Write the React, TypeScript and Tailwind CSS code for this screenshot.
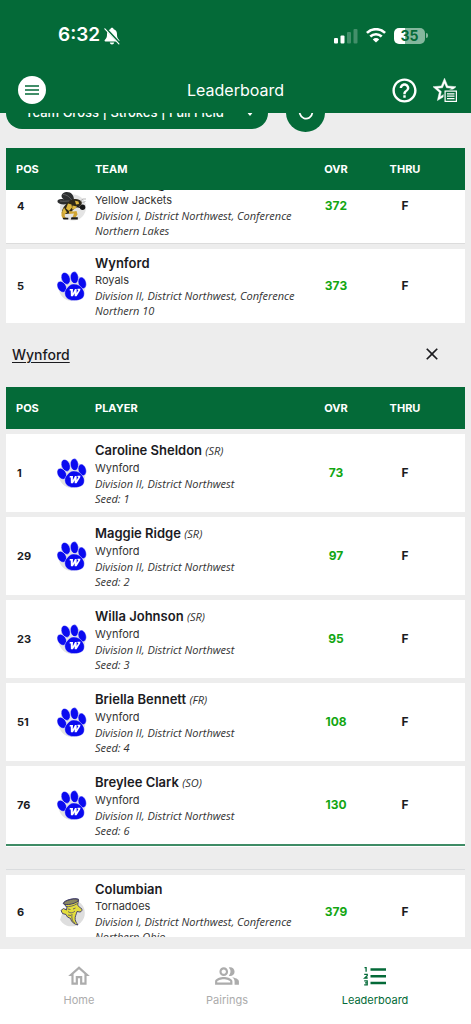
import React, { useState } from "react";
import { MdClose, MdHelpOutline, MdOutlineHome, MdOutlinePeopleAlt } from "react-icons/md";

interface Team {
  pos: number;
  name: string;
  mascot: string;
  details: string;
  score: number;
  thru: string;
  logo: React.ReactNode;
}

interface Player {
  pos: number;
  name: string;
  year: string;
  seed: number;
  score: number;
}

const PawLogo = () => (
  <svg viewBox="0 0 30 30" className="size-[30px]" aria-hidden="true">
    <circle cx="15" cy="16.5" r="13.3" fill="#e3e3e3" />
    <g fill="#0a0af0" stroke="#fff" strokeWidth="0.4">
      <ellipse cx="4.8" cy="15.8" rx="4.2" ry="6" transform="rotate(-32 4.8 15.8)" />
      <ellipse cx="8.7" cy="7.4" rx="4.2" ry="6.2" transform="rotate(-22 8.7 7.4)" />
      <ellipse cx="17.4" cy="6.6" rx="4" ry="6" transform="rotate(-6 17.4 6.6)" />
      <ellipse cx="25.2" cy="11.9" rx="3.9" ry="5.9" transform="rotate(-16 25.2 11.9)" />
      <path d="M16.8 13c-3.600 0-5 2.200-6.700 3.900-2 2-3 4.700-2 7.500 1.400 3.900 5.200 5.200 9.400 5.200 5 0 9-1.500 9.700-5.500.500-3-.500-4.700-1.900-6.700-1.800-2.600-4.500-4.400-8.500-4.400z" />
    </g>
    <path
      d="M12.800 18h3.200l-.200 4.200 2.200-4.200h1.600l.100 4 1.700-2.900h-.900v-1.300h3l-.400 1.600-3.500 5.800h-1.900l-.100-3-1.600 3h-2.100l-.200-5.600h-1.100z"
      fill="#fff"
    />
  </svg>
);

const HornetLogo = () => (
  <svg viewBox="0 0 30 30" className="size-[30px]" aria-hidden="true">
    <circle cx="16" cy="16.500" r="13" fill="#e4e4e4" />
    <path d="M14 12C9 14 2 14 .500 11 0 8 4 7.500 7 8.500 3 6 4 2 9 1c5-.500 8 3 8 8z" fill="#2c2e2f" />
    <path d="M6 3.500c4 0 7 3 9 6M3 10c4 .500 6 0 9.500 0" stroke="#777" fill="none" strokeWidth="0.700" />
    <path d="M13 10c4-3 9-2.500 11.500.500 1 2.500-.500 4.500-3 5l-4 2-5 5-7 1c-2-4 2-10 7.500-13.500z" fill="#2e2818" />
    <path
      d="M11 12.500l3.500 1 .500 3-3 3.500-3-2.500zM7 16.500l3 5-3.500 2.500-1.500-3zM18 9.800l3.500.700.500 2.500-3 .500zM15.500 14.500l4.500 1-2 2.500-3 .500z"
      fill="#dfb83f"
    />
    <path d="M4.500 21l3 1.500.500 3.500 2.500 1.500H6L4.500 25zM12 20l4.500.500 3-.500 1 3.500-2 3h-3l1.500-4-5 .500z" fill="#d0a534" />
    <path d="M5.500 26.700h5.800v1.800H6.500zM14.500 26.200h6.300v2.300h-7z" fill="#1b1b1b" />
    <path d="M20 15.500l4 1" stroke="#1b1b1b" strokeWidth="1.600" />
    <circle cx="25.600" cy="16.300" r="2.700" fill="#171717" />
    <path d="M23.500 10l2.500-2h3M25.500 11.500l3-1" stroke="#999" fill="none" strokeWidth="0.700" />
  </svg>
);

const TornadoLogo = () => (
  <svg viewBox="0 0 30 30" className="size-[30px]" aria-hidden="true">
    <circle cx="14.500" cy="16" r="13.300" fill="#dedede" />
    <path d="M0 0h17L6 14 3 23 0 20z" fill="#fff" />
    <path
      d="M6.200 6.500C7 3 18 .500 21.500 2.200c.300 2.500-1 4.300-.700 6.300 1.700.700 1.500 2.500 3.700 3 1 1.500.300 3-1.500 3.500l-3-.500c-.800 3.500-2.300 5-1.800 8 .300 2.200 1.500 3.500 2.800 5.500-3.500-.500-6.700-3-7.500-6.500l-3-1.500-1.500-2.500-3.500-1-1.500-3 2.500-2 3 1.500.500-3z"
      fill="#e3dd3d"
      stroke="#3a3768"
      strokeWidth="0.900"
      strokeLinejoin="round"
    />
    <ellipse cx="14" cy="4.800" rx="7.500" ry="2.300" transform="rotate(-13 14 4.800)" fill="#8a8760" stroke="#3a3768" strokeWidth="0.900" />
    <path
      d="M8.500 9.500c4 .500 8-.500 12-3M11 12l2.500.500M16 12l2.500-1M11 14.500c2.500 2 5 1.500 7-.500M11 18l3 .500M15 17c-.500 4 0 7 3 9.500"
      stroke="#4b4870"
      fill="none"
      strokeWidth="0.800"
    />
  </svg>
);

const BellOffIcon = () => (
  <svg viewBox="0 0 16 18" className="h-[18px] w-4" aria-hidden="true">
    <path
      d="M8 .800c.900 0 1.600.600 1.700 1.500 2.300.700 3.300 2.600 3.300 5 0 3.700 1 4.500 2.200 5.800.500.600.200 1.400-.600 1.400H1.400c-.800 0-1.100-.800-.600-1.400C2 11.800 3 11 3 7.300c0-2.400 1-4.300 3.300-5C6.400 1.400 7.100.800 8 .800zM5.800 15.500h4.400c-.200 1.200-1.100 1.900-2.200 1.900s-2-.700-2.200-1.900z"
      fill="#fff"
    />
    <path d="M1.500 1.200l14 15" stroke="#046a38" strokeWidth="2.400" />
    <path d="M.900 1.800l14 15" stroke="#fff" strokeWidth="1.200" strokeLinecap="round" />
  </svg>
);

const SignalIcon = () => (
  <svg viewBox="0 0 24 16" className="h-4 w-6" fill="#fff" aria-hidden="true">
    <rect x="0" y="10" width="4" height="5.500" rx="1" />
    <rect x="6.500" y="7.500" width="4" height="8" rx="1" />
    <rect x="13" y="4" width="4" height="11.500" rx="1" opacity="0.250" />
    <rect x="19.500" y="1" width="4" height="14.500" rx="1" opacity="0.250" />
  </svg>
);

const WifiIcon = () => (
  <svg viewBox="0 0 20 15" className="h-[15px] w-5" aria-hidden="true">
    <g fill="none" stroke="#fff" strokeWidth="2.600">
      <path d="M.900 4.900a13 13 0 0 1 18.200 0" />
      <path d="M4.300 8.500a8.200 8.200 0 0 1 11.400 0" />
    </g>
    <path d="M10 14.500L6.800 11.400a4.600 4.600 0 0 1 6.400 0z" fill="#fff" />
  </svg>
);

const FavoritesIcon = () => (
  <svg viewBox="0 0 24 24" className="size-6" aria-hidden="true">
    <path
      transform="translate(-2.3 -2.2) scale(1.15 1.18)"
      fill="#fff"
      stroke="#fff"
      strokeWidth="0.4"
      d="M12 15.390l-3.760 2.270.990-4.280-3.320-2.880 4.380-.370L12 6.090l1.710 4.040 4.380.370-3.320 2.880.990 4.280M22 9.240l-7.190-.610L12 2 9.190 8.630 2 9.240l5.450 4.730L5.820 21 12 17.270 18.180 21l-1.640-7.030L22 9.240z"
    />
    <rect x="10.500" y="11.500" width="13.500" height="12.500" fill="#046a38" />
    <rect x="12.100" y="13.100" width="11.300" height="10.300" fill="none" stroke="#fff" strokeWidth="1.200" />
    <path d="M14 15.900h7.500M14 18.200h7.500M14 20.600h7.500" stroke="#fff" strokeWidth="1.200" />
  </svg>
);

const NumberedListIcon = () => (
  <svg viewBox="0 0 24 20" className="h-5 w-6" fill="none" stroke="currentColor" aria-hidden="true">
    <path d="M7.500 3.500h15.500M7.500 10.300h15.500M7.500 17h15.500" strokeWidth="2.500" />
    <path
      d="M1.500 1.600h1.600v4.200M1.200 8.300h3v1.500L1.700 12h3M1.200 14.800h3v4H1.200M2 16.800h2"
      strokeWidth="1.300"
    />
  </svg>
);

const teams: Team[] = [
  {
    pos: 4,
    name: "Perrysburg",
    mascot: "Yellow Jackets",
    details: "Division I, District Northwest, Conference Northern Lakes",
    score: 372,
    thru: "F",
    logo: <HornetLogo />,
  },
  {
    pos: 5,
    name: "Wynford",
    mascot: "Royals",
    details: "Division II, District Northwest, Conference Northern 10",
    score: 373,
    thru: "F",
    logo: <PawLogo />,
  },
  {
    pos: 6,
    name: "Columbian",
    mascot: "Tornadoes",
    details: "Division I, District Northwest, Conference Northern Ohio",
    score: 379,
    thru: "F",
    logo: <TornadoLogo />,
  },
];

const players: Player[] = [
  { pos: 1, name: "Caroline Sheldon", year: "SR", seed: 1, score: 73 },
  { pos: 29, name: "Maggie Ridge", year: "SR", seed: 2, score: 97 },
  { pos: 23, name: "Willa Johnson", year: "SR", seed: 3, score: 95 },
  { pos: 51, name: "Briella Bennett", year: "FR", seed: 4, score: 108 },
  { pos: 76, name: "Breylee Clark", year: "SO", seed: 6, score: 130 },
];

const rowGrid =
  "grid grid-cols-[41px_38px_1fr_70px_68px] items-center pl-[10px] pr-[26px]";

const TableHead = ({ label }: { label: string }) => (
  <thead className="block">
    <tr className={`${rowGrid} h-[42px] bg-[#046a38] text-[11px] font-bold text-white`}>
      <th className="text-left">POS</th>
      <td></td>
      <th className="text-left">{label}</th>
      <th>OVR</th>
      <th>THRU</th>
    </tr>
  </thead>
);

const TeamRow = ({ team }: { team: Team }) => (
  <tr className={`${rowGrid} shrink-0 bg-white py-[5px]`}>
    <td className="pl-px text-[11px] font-bold">{team.pos}</td>
    <td>{team.logo}</td>
    <td className="text-[11px] leading-[15px]">
      <div className="text-[13px] leading-[19px] font-semibold">{team.name}</div>
      <div className="text-[#333]">{team.mascot}</div>
      <div className="font-['Open_Sans'] text-[#333] italic">{team.details}</div>
    </td>
    <td className="text-center text-[12px] font-bold text-[#12a612]">{team.score}</td>
    <td className="text-center text-[12px] font-bold">{team.thru}</td>
  </tr>
);

const PlayerRow = ({ player }: { player: Player }) => (
  <tr className={`${rowGrid} bg-white py-[6px]`}>
    <td className="pl-px text-[11px] font-bold">{player.pos}</td>
    <td>
      <PawLogo />
    </td>
    <td className="text-[11px] leading-[15px]">
      <div className="mb-px text-[13px] leading-5 font-semibold">
        {player.name}{" "}
        <span className="font-['Open_Sans'] text-[11px] leading-none font-normal text-[#333] italic">
          ({player.year})
        </span>
      </div>
      <div className="text-[#333]">Wynford</div>
      <div className="font-['Open_Sans'] text-[#333] italic">
        <div>Division II, District Northwest</div>
        <div>Seed: {player.seed}</div>
      </div>
    </td>
    <td className="text-center text-[12px] font-bold text-[#12a612]">{player.score}</td>
    <td className="text-center text-[12px] font-bold">F</td>
  </tr>
);

const App: React.FC = () => {
  const [tab, setTab] = useState("leaderboard");

  const tabs = [
    { id: "home", label: "Home", icon: <MdOutlineHome size={26} /> },
    { id: "pairings", label: "Pairings", icon: <MdOutlinePeopleAlt size={26} /> },
    { id: "leaderboard", label: "Leaderboard", icon: <NumberedListIcon /> },
  ];

  return (
    <div className="flex h-screen flex-col overflow-hidden bg-[#ededed] font-[Inter,sans-serif] text-[#1b1b1f]">
      <header className="shrink-0 bg-[#046a38] text-white">
        <div className="flex h-[67px] items-center justify-between pt-1 pr-[43px] pl-[58px]">
          <div className="flex items-center gap-1 text-[19px] font-semibold">
            <span>6:32</span>
            <BellOffIcon />
          </div>
          <div className="flex items-center gap-2">
            <SignalIcon />
            <WifiIcon />
            <div className="flex items-center gap-px">
              <div className="flex h-4 w-[31px] items-center justify-center rounded-[5px] bg-linear-to-r from-white from-35% to-[#84b79d] to-35% text-[14px] font-bold text-[#046a38]">
                35
              </div>
              <div className="h-[5px] w-[2px] rounded-r bg-[#84b79d]"></div>
            </div>
          </div>
        </div>
        <div className="grid h-[46px] grid-cols-[1fr_auto_1fr] items-center px-[14px]">
          <button
            aria-label="Menu"
            className="ml-1 flex size-7 items-center justify-center rounded-full bg-white"
          >
            <svg viewBox="0 0 14 10" className="h-[10px] w-[14px]" aria-hidden="true">
              <path d="M0 1h14M0 5h14M0 9h14" stroke="#046a38" strokeWidth="1.600" />
            </svg>
          </button>
          <h1 className="text-[16px]">Leaderboard</h1>
          <div className="flex items-center justify-end gap-[14px]">
            <button aria-label="Help">
              <MdHelpOutline size={29} />
            </button>
            <button aria-label="Favorites">
              <FavoritesIcon />
            </button>
          </div>
        </div>
      </header>

      <main className="mb-3 min-h-0 flex-1 overflow-hidden px-[6px]">
        <div className="flex h-[19px] items-end gap-[18px] overflow-hidden">
          <button className="mb-[3px] flex h-8 w-[262px] shrink-0 items-center justify-between rounded-full bg-[#046a38] pr-[14px] pl-[19px] text-[13px] font-medium text-white">
            Team Gross | Strokes | Full Field
            <svg viewBox="0 0 8 5" className="h-[5px] w-2" aria-hidden="true">
              <path d="M0 0h8L4 5z" fill="#fff" />
            </svg>
          </button>
          <button
            aria-label="Refresh"
            className="flex size-[39px] shrink-0 items-center justify-center rounded-full bg-[#046a38]"
          >
            <svg viewBox="0 0 16 16" className="size-4" aria-hidden="true">
              <path d="M13 3.500A6.300 6.300 0 1 0 14.300 8" fill="none" stroke="#fff" strokeWidth="1.800" />
              <path d="M14.500 1v5h-5z" fill="#fff" />
            </svg>
          </button>
        </div>

        <table className="mt-4 block">
          <TableHead label="TEAM" />
          <tbody className="flex h-[133px] flex-col justify-end overflow-hidden">
            <TeamRow team={teams[0]} />
            <tr className="mb-[5px] block h-px shrink-0 bg-[#dcdcdc]"></tr>
            <TeamRow team={teams[1]} />
          </tbody>
        </table>

        <div className="flex h-16 items-center justify-between pr-[23px] pb-[2px] pl-[6px]">
          <a href="#wynford" className="text-[14px] font-medium underline underline-offset-2">
            Wynford
          </a>
          <button aria-label="Close">
            <MdClose size={20} />
          </button>
        </div>

        <table className="block border-b border-white">
          <TableHead label="PLAYER" />
          <tbody className="flex flex-col gap-[5px] border-b-2 border-[#3f8c66] pt-[5px]">
            {players.map((player) => (
              <PlayerRow key={player.name} player={player} />
            ))}
          </tbody>
        </table>

        <table className="mt-[22px] block border-t border-[#dadcde] pt-[5px]">
          <tbody className="block">
            <TeamRow team={teams[2]} />
          </tbody>
        </table>
      </main>

      <nav className="grid h-[75px] shrink-0 grid-cols-3 items-start bg-white pt-[14px] pr-[22px] pl-[5px]">
        {tabs.map((t) => (
          <button
            key={t.id}
            onClick={() => setTab(t.id)}
            className={`flex flex-col items-center gap-[3px] text-[11px] ${
              tab === t.id ? "text-[#046a38]" : "text-[#acacac]"
            }`}
          >
            <span className="flex h-[26px] items-center">{t.icon}</span>
            {t.label}
          </button>
        ))}
      </nav>
    </div>
  );
};

export default App;
